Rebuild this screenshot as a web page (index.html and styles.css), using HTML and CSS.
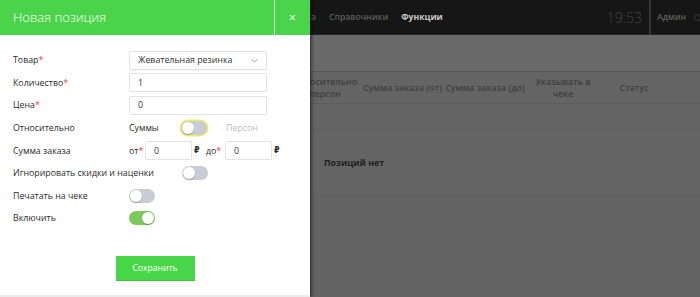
FILE: index.html
```html
<!DOCTYPE html>
<html lang="ru">
<head>
<meta charset="utf-8">
<link rel="stylesheet" href="styles.css">
</head>
<body>
<div class="page">
  <nav class="topnav">
    <div class="nav-links">
      <span class="nav-item">Касса</span>
      <span class="nav-item">Справочники</span>
      <span class="nav-item active">Функции</span>
    </div>
    <div class="clock">19:53</div>
    <div class="user">Админ <span class="user-dot"></span></div>
  </nav>
  <div class="subheader"></div>
  <div class="table">
    <div class="thead">
      <div class="th w-hidden"></div>
      <div class="th w4">Относительно персон</div>
      <div class="th w5">Сумма заказа (от)</div>
      <div class="th w6">Сумма заказа (до)</div>
      <div class="th w7">Указывать в чеке</div>
      <div class="th w8">Статус</div>
    </div>
    <div class="trow"></div>
    <div class="empty">Позиций нет</div>
  </div>
</div>

<aside class="panel">
  <header class="panel-head">
    <h1 class="panel-title">Новая позиция</h1>
    <button class="panel-close">×</button>
  </header>
  <form class="panel-body">
    <div class="row">
      <label class="lbl">Товар<span class="req">*</span></label>
      <div class="select">Жевательная резинка
        <svg class="chev" width="7" height="5" viewBox="0 0 7 5"><path d="M0.5 1 L3.5 4 L6.5 1" fill="none" stroke="#999" stroke-width="1"/></svg>
      </div>
    </div>
    <div class="row">
      <label class="lbl">Количество<span class="req">*</span></label>
      <div class="input wide">1</div>
    </div>
    <div class="row">
      <label class="lbl">Цена<span class="req">*</span></label>
      <div class="input wide">0</div>
    </div>
    <div class="row">
      <label class="lbl">Относительно</label>
      <span class="opt">Суммы</span>
      <span class="toggle focus"><span class="knob"></span></span>
      <span class="opt muted">Персон</span>
    </div>
    <div class="row">
      <label class="lbl">Сумма заказа</label>
      <span class="range-lbl">от<span class="req">*</span></span>
      <div class="input small">0</div>
      <span class="rub">₽</span>
      <span class="range-lbl second">до<span class="req">*</span></span>
      <div class="input small">0</div>
      <span class="rub">₽</span>
    </div>
    <div class="row">
      <label class="lbl auto">Игнорировать скидки и наценки</label>
      <span class="toggle"><span class="knob"></span></span>
    </div>
    <div class="row">
      <label class="lbl">Печатать на чеке</label>
      <span class="toggle"><span class="knob"></span></span>
    </div>
    <div class="row">
      <label class="lbl">Включить</label>
      <span class="toggle on"><span class="knob"></span></span>
    </div>
    <div class="actions">
      <button type="button" class="save">Сохранить</button>
    </div>
  </form>
</aside>
</body>
</html>
```
FILE: styles.css
```css
* { box-sizing: border-box; }
html, body { margin: 0; padding: 0; }
body {
  width: 700px;
  height: 297px;
  overflow: hidden;
  font-family: "Open Sans", "DejaVu Sans", sans-serif;
  background: #636363;
  position: relative;
}

/* background page (dimmed) */
.page { width: 700px; height: 297px; }
.topnav {
  height: 35px;
  background: #161616;
  border-bottom: 1px solid #262626;
  display: flex;
  align-items: center;
}
.nav-links {
  display: flex;
  gap: 13px;
  padding-left: 292px;
  flex: 1;
  font-size: 8.6px;
  font-weight: 600;
}
.nav-item { color: #5c5c5c; }
.nav-item.active { color: #c9c9c9; font-weight: 700; }
.clock {
  font-size: 14px;
  font-weight: 300;
  color: #424242;
  padding-right: 7px;
  height: 35px;
  line-height: 35px;
}
.user {
  height: 35px;
  border-left: 2px solid #363636;
  padding-left: 6px;
  width: 51px;
  display: flex;
  align-items: center;
  gap: 8px;
  font-size: 8.6px;
  font-weight: 600;
  color: #5e5e5e;
  white-space: nowrap;
}
.user-dot {
  display: inline-block;
  width: 7px;
  height: 7px;
  border-radius: 50%;
  border: 1.5px solid #3a3a3a;
  flex: none;
}
.subheader {
  height: 37px;
  background: #6a6a6a;
  border-bottom: 1px solid #575757;
}
.table { background: #646464; }
.thead {
  display: flex;
  height: 32px;
  align-items: center;
  border-bottom: 1px solid #5c5c5c;
}
.th {
  text-align: center;
  font-size: 8.8px;
  font-weight: 600;
  color: #404040;
  line-height: 12px;
  flex: none;
}
.w-hidden { width: 287px; }
.w4 { width: 76px; }
.w5 { width: 74px; white-space: nowrap; }
.w6 { width: 96px; white-space: nowrap; }
.w7 { width: 60px; }
.w8 { width: 82px; }
.trow {
  height: 26px;
  border-bottom: 1px solid #5e5e5e;
}
.empty {
  padding: 27px 0 0 324px;
  font-size: 8.8px;
  font-weight: 700;
  color: #1e1e1e;
  height: 65px;
  border-bottom: 1px solid #5f5f5f;
}

/* panel */
.panel {
  position: absolute;
  left: 0;
  top: 0;
  width: 310px;
  height: 297px;
  background: #fff;
  border-bottom: 2px solid #ececec;
  box-shadow: 2px 0 3px rgba(0, 0, 0, 0.45);
  display: flex;
  flex-direction: column;
}
.panel-head {
  height: 35px;
  background: #4bd34b;
  display: flex;
  align-items: stretch;
  flex: none;
}
.panel-title {
  margin: 0;
  flex: 1;
  padding-left: 13px;
  font-size: 13px;
  font-weight: 300;
  color: #fff;
  line-height: 35px;
}
.panel-close {
  width: 36px;
  border: 0;
  border-left: 1px solid rgba(255, 255, 255, 0.75);
  background: transparent;
  color: #fff;
  font-family: "Open Sans", sans-serif;
  font-size: 12px;
  padding: 0;
  line-height: 35px;
}
.panel-body {
  margin: 0;
  padding: 14px 13px 0 13px;
  display: flex;
  flex-direction: column;
}
.row {
  height: 22.6px;
  display: flex;
  align-items: center;
  font-size: 8.8px;
  color: #2b2b2b;
}
.lbl {
  width: 116px;
  flex: none;
  font-weight: 500;
  color: #2b2b2b;
}
.lbl.auto { width: auto; margin-right: 28px; }
.req { color: #f23a3a; }
.select, .input {
  height: 19px;
  border: 1px solid #e3e3e3;
  border-radius: 1px;
  padding-left: 8px;
  display: flex;
  align-items: center;
  font-size: 8.8px;
  color: #333;
}
.select {
  width: 138px;
  justify-content: space-between;
  padding-right: 8px;
  box-shadow: 0 1px 1px rgba(0,0,0,0.05);
}
.input.wide { width: 138px; }
.input.small { width: 47px; margin-left: 1px; }
.opt { width: 52px; flex: none; }
.opt.muted { color: #bdbdbd; margin-left: 19px; }
.range-lbl { width: 15px; flex: none; }
.range-lbl.second { width: 18px; margin-left: 7px; }
.rub { margin-left: 2px; width: 5px; font-size: 8px; font-weight: 700; font-family: "DejaVu Sans", sans-serif; }
.toggle {
  width: 26px;
  height: 14px;
  border-radius: 7px;
  background: #c9ccd4;
  position: relative;
  flex: none;
}
.toggle .knob {
  position: absolute;
  top: 1px;
  left: 1px;
  width: 12px;
  height: 12px;
  border-radius: 50%;
  background: #fff;
  box-shadow: 0 1px 1px rgba(0,0,0,0.25);
}
.toggle.on { background: #7dc95a; }
.toggle.on .knob { left: 13px; }
.toggle.focus { box-shadow: 0 0 0 1.5px #efec6a; }
.actions {
  display: flex;
  justify-content: center;
  padding-top: 26px;
}
.save {
  width: 79px;
  height: 25px;
  background: #47d647;
  border: 0;
  border-bottom: 1px solid #3dc23d;
  color: #fff;
  font-family: "Open Sans", sans-serif;
  font-size: 8.6px;
  padding: 0;
}
```
